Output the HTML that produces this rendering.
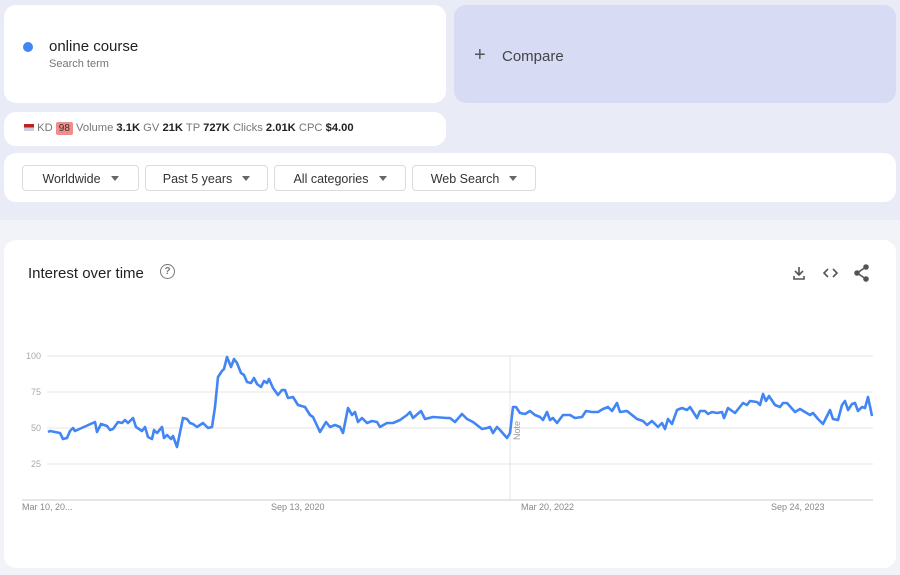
<!DOCTYPE html>
<html><head><meta charset="utf-8"><style>
body{margin:0;width:900px;height:575px;background:#e9ebf6;font-family:"Liberation Sans",sans-serif;position:relative;overflow:hidden}
.c{position:absolute;background:#fff;border-radius:12px}
.lower{position:absolute;left:0;top:220px;width:900px;height:355px;background:#f1f3f8}
.dd{position:absolute;top:165px;height:26px;border:1px solid #dadce0;border-radius:4px;font-size:12.5px;color:#333;line-height:26px;text-align:center;box-sizing:border-box;background:#fff}
.dd:after{content:"";display:inline-block;margin-left:10px;border:4px solid transparent;border-top:5px solid #666;vertical-align:-2px}
.m{font-size:11.2px;color:#777}.m b{color:#222}
</style></head><body>
<div class="lower"></div>
<div class="c" style="left:4px;top:5px;width:442px;height:98px">
 <div style="position:absolute;left:19px;top:37px;width:10px;height:10px;border-radius:50%;background:#4285f4"></div>
 <div style="position:absolute;left:45px;top:33px;font-size:15px;color:#202124">online course</div>
 <div style="position:absolute;left:45px;top:53px;font-size:11px;color:#70757a">Search term</div>
</div>
<div style="position:absolute;left:454px;top:5px;width:442px;height:98px;background:#d7dbf4;border-radius:12px">
 <div style="position:absolute;left:20px;top:40px;font-size:20px;color:#555;line-height:20px">+</div>
 <div style="position:absolute;left:48px;top:43px;font-size:15px;color:#444">Compare</div>
</div>
<div class="c" style="left:4px;top:112px;width:442px;height:34px">
 <div class="m" style="position:absolute;left:20px;top:10px;white-space:nowrap">
 <span style="display:inline-block;width:10px;height:7px;background:linear-gradient(#b22 0 50%,#ccd 50%);vertical-align:0"></span> KD <span style="background:#f08c8c;color:#333;padding:1px 3px;border-radius:2px;font-size:10px">98</span> Volume <b>3.1K</b> GV <b>21K</b> TP <b>727K</b> Clicks <b>2.01K</b> CPC <b>$4.00</b></div>
</div>
<div class="c" style="left:4px;top:153px;width:892px;height:49px"></div>
<div class="dd" style="left:22px;width:117px">Worldwide</div>
<div class="dd" style="left:145px;width:123px">Past 5 years</div>
<div class="dd" style="left:274px;width:132px">All categories</div>
<div class="dd" style="left:412px;width:124px">Web Search</div>
<div class="c" style="left:4px;top:240px;width:892px;height:328px">
 <div style="position:absolute;left:24px;top:25px;font-size:15px;color:#202124">Interest over time</div>
 <div style="position:absolute;left:156px;top:24px;width:13px;height:13px;border:1.5px solid #777;border-radius:50%;font-size:10px;color:#777;text-align:center;line-height:13px;font-weight:bold">?</div>
</div>
<svg style="position:absolute;left:0;top:0" width="900" height="575">
 <g stroke="#555" stroke-width="1.6" fill="none">
  <path d="M799 267v8M795 271l4 4 4-4M794 276v3h10v-3"/>
  <path d="M828 269l-4 4 4 4M833 269l4 4-4 4"/>
  <circle cx="866" cy="267" r="2" fill="#555"/><circle cx="857" cy="273" r="2" fill="#555"/><circle cx="866" cy="279" r="2" fill="#555"/>
  <path d="M866 267l-9 6 9 6"/>
 </g>
 <g stroke="#e4e4e4" stroke-width="1">
  <path d="M47 356H873M47 392H873M47 428H873M47 464H873"/>
  <path d="M510 356V500"/>
 </g>
 <path d="M22 500H873" stroke="#ccc"/>
 <text x="41" y="359" font-size="9" fill="#aaa" text-anchor="end" font-family="Liberation Sans">100</text>
 <text x="41" y="395" font-size="9" fill="#aaa" text-anchor="end" font-family="Liberation Sans">75</text>
 <text x="41" y="431" font-size="9" fill="#aaa" text-anchor="end" font-family="Liberation Sans">50</text>
 <text x="41" y="467" font-size="9" fill="#aaa" text-anchor="end" font-family="Liberation Sans">25</text>
 <text x="0" y="0" font-size="9" fill="#999" font-family="Liberation Sans" transform="translate(520,440) rotate(-90)">Note</text>
 <g font-size="9" fill="#888" font-family="Liberation Sans">
  <text x="22" y="510">Mar 10, 20...</text><text x="271" y="510">Sep 13, 2020</text>
  <text x="521" y="510">Mar 20, 2022</text><text x="771" y="510">Sep 24, 2023</text>
 </g>
 <polyline fill="none" stroke="#4285f4" stroke-width="2.6" stroke-linejoin="round" points="48,432 50,431 55,432 60,433 63,439 67,438 70,431 73,428 75,431 95,422 97,432 101,424 107,426 110,430 113,429 118,422 122,423 125,420 128,423 133,418 136,427 142,431 145,427 148,437 152,439 154,430 157,433 162,427 164,438 167,435 171,439 173,436 177,447 183,418 187,419 190,423 193,424 197,427 203,423 208,428 212,427 215,407 218,377 222,371 224,369 227,357 231,367 234,359 237,363 241,373 244,375 247,382 251,383 254,378 257,384 261,387 264,381 267,383 269,379 273,388 278,395 282,390 285,390 288,398 293,397 298,405 305,407 310,415 313,417 320,432 326,422 330,427 335,425 340,427 343,433 348,408 352,415 355,412 358,422 362,418 367,423 372,421 377,422 380,427 387,423 393,423 400,420 407,415 410,412 413,418 421,411 425,419 433,417 447,418 450,418 455,422 462,414 467,419 473,422 482,429 487,428 490,427 493,433 497,427 500,430 507,438 510,433 513,407 516,407 520,413 525,414 530,411 535,415 540,417 543,420 547,412 550,420 553,418 557,423 563,415 570,415 575,418 582,417 586,411 592,412 598,412 603,409 608,407 612,411 617,403 620,412 627,411 637,419 643,421 647,425 652,421 658,427 662,423 665,429 668,419 672,424 677,410 682,408 687,410 690,407 697,418 700,411 705,411 708,414 712,412 717,413 722,412 724,418 728,408 735,413 743,403 747,405 750,401 757,402 760,405 763,394 766,401 769,396 775,405 780,407 783,403 787,403 795,412 800,409 810,415 813,413 818,419 823,424 830,410 833,419 838,420 842,405 845,401 848,410 852,404 855,403 858,411 862,407 865,408 868,397 872,416"/>
</svg>
</body></html>
